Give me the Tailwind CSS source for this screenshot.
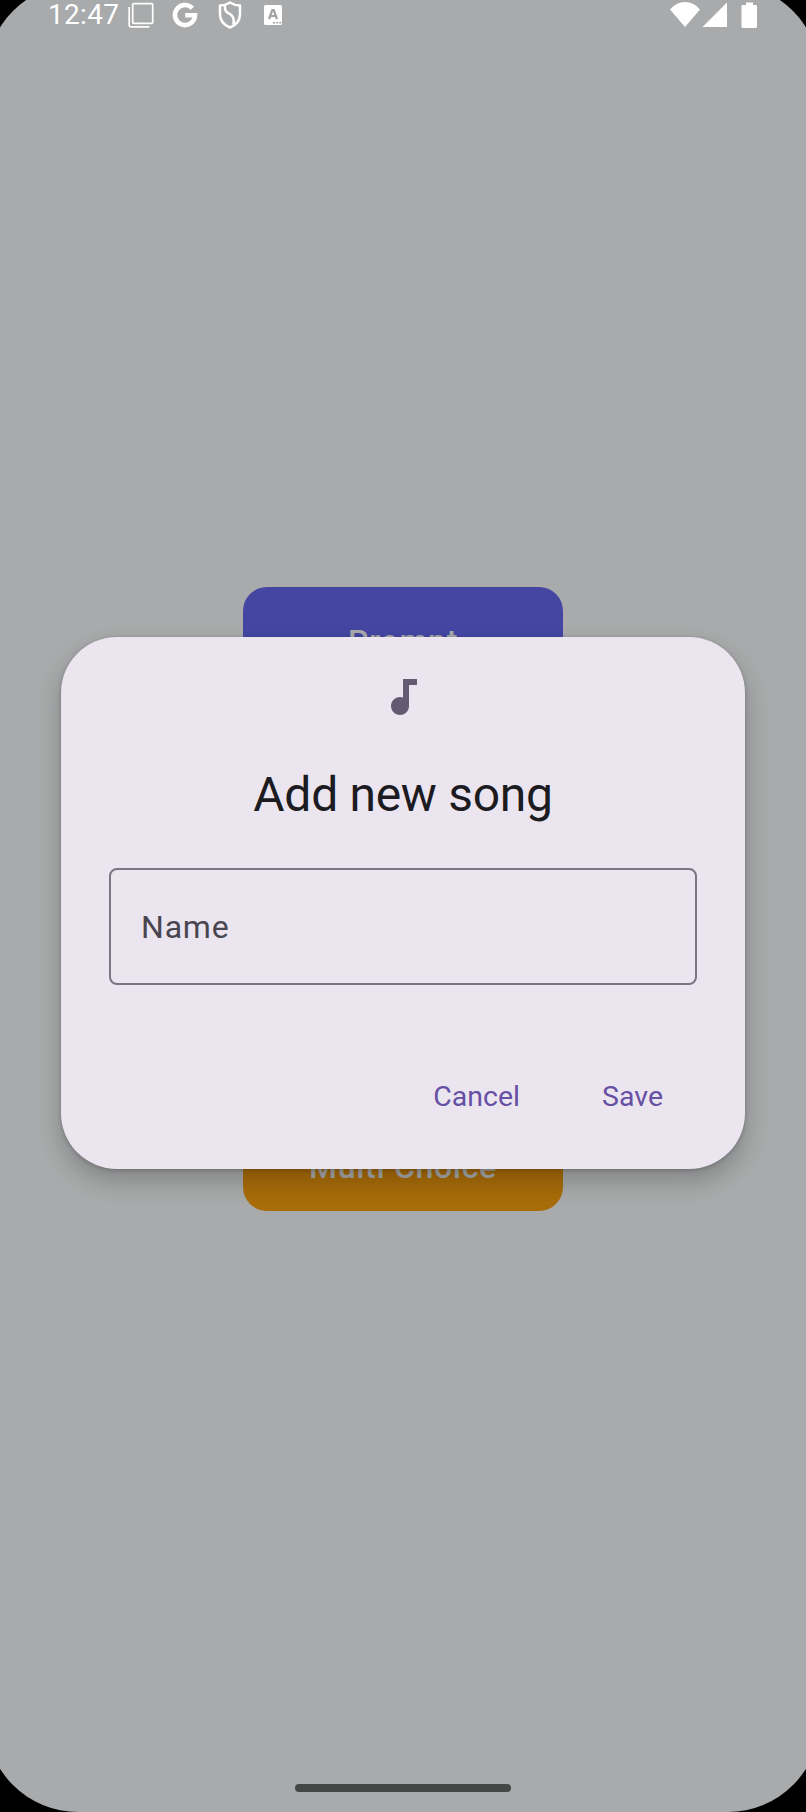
<!DOCTYPE html>
<html lang="en">
<head>
<meta charset="utf-8">
<title>Add new song</title>
<script src="https://cdn.jsdelivr.net/npm/@tailwindcss/browser@4"></script>
</head>
<body class="bg-black">
<div class="relative h-[1812px] w-[806px] overflow-hidden bg-black font-['Roboto',sans-serif]">
  <div class="-mx-[14px] -mt-4 flex h-[1828px] flex-col rounded-[92px] bg-[#a8aaab] px-[14px] pt-4">
    <header class="flex h-[30px] shrink-0 items-center justify-between pl-[48px] pr-[48px] text-white">
      <div class="flex items-center">
        <span class="w-[80px] text-[28px] leading-[30px] tracking-[0.3px]">12:47</span>
        <svg class="h-[26px] w-[26px]" viewBox="0 0 26 26" fill="none" stroke="currentColor" stroke-width="1.700"><rect x="4.700" y="1.700" width="20" height="19.600" rx="1"/><path d="M1.200 5v18.200q0 1.600 1.600 1.600H21.500"/></svg>
        <svg class="ml-[18px] h-[26px] w-[26px]" viewBox="0 0 26 26" fill="none" stroke="currentColor" stroke-width="4.600"><path d="M20.300 6.200A10 10 0 1 0 23 13.300H13.200"/></svg>
        <svg class="ml-[20px] h-[28px] w-[24px]" viewBox="0 0 24 28" fill="none" stroke="currentColor" stroke-width="2.500" stroke-linejoin="round"><path d="M12 1.500Q16.500 4.500 22 4.500V13Q22 22.500 12 26.500Q2 22.500 2 13V4.500Q7.500 4.500 12 1.500Z"/><path d="M7 4.500C6 13 12 11 14.500 15.500Q16.500 19 15.500 23.500"/></svg>
        <svg class="ml-[21px] h-[22px] w-[20px]" viewBox="0 0 20 22"><rect x="1" y="1" width="18" height="20" rx="1.500" fill="currentColor"/><path d="M6 15l3.300-9h1.400l3.300 9M7.300 12h5.400" fill="none" stroke="#a0a2a3" stroke-width="2.200"/><path d="M10 18.700h2M13.200 18.700h2M16.300 18.700h2" stroke="#a0a2a3" stroke-width="1.500"/></svg>
      </div>
      <svg class="h-[28px] w-[89px]" viewBox="669 0 89 28" fill="currentColor"><path d="M670 8.500Q676 1 685 1T700 8.500L685 26ZM702.500 26L727 1.500V26ZM741.500 5Q741.500 4 742.500 4H746V1.500H753V4H756Q757 4 757 5V25.500Q757 27 755.500 27H743Q741.500 27 741.500 25.500Z"/></svg>
    </header>
    <main class="mt-[557px] flex h-[624px] w-[320px] shrink-0 flex-col justify-between self-center text-center text-[32px] font-medium leading-[38px] tracking-[0.700px] text-[#a8aaab]">
      <div class="h-[100px] rounded-[24px] bg-[#4446a2] pt-[35px]">Prompt</div>
      <div class="h-[100px] rounded-[24px] bg-[#a86c09] pt-[37px]">Multi Choice</div>
    </main>
    <div class="mb-[20px] mt-auto h-[8px] w-[216px] self-center rounded-full bg-[#454746]"></div>
  </div>

  <!-- Dialog over the dimmed screen -->
  <div class="absolute left-[61px] top-[637px] flex h-[532px] w-[684px] flex-col rounded-[56px] bg-[#ebe5f0] px-[48px] pt-[36px] shadow-[0_12px_24px_rgba(0,0,0,0.22),0_1px_4px_rgba(0,0,0,0.2)]">
    <svg class="h-[48px] w-[48px] self-center" viewBox="0 0 24 24" fill="#645b73"><path d="M12 3v9.280c-.47-.17-.97-.28-1.500-.28C8.010 12 6 14.010 6 16.500S8.010 21 10.500 21c2.310 0 4.200-1.750 4.450-4H15V6h4V3h-7z"/></svg>
    <h1 class="mt-[42px] text-center text-[48px] leading-[64px] tracking-[-0.3px] text-[#1c1b1f]">Add new song</h1>
    <div class="mt-[41px] flex h-[117px] items-center rounded-[8px] border-2 border-[#7b7583] px-[30px] text-[32px] tracking-[0.8px] text-[#49454f]">Name</div>
    <div class="mt-[92px] flex justify-end gap-[82px] pr-[34px] text-[28.5px] leading-[40px] text-[#6750a4]"><span>Cancel</span><span>Save</span></div>
  </div>
</div>
</body>
</html>
